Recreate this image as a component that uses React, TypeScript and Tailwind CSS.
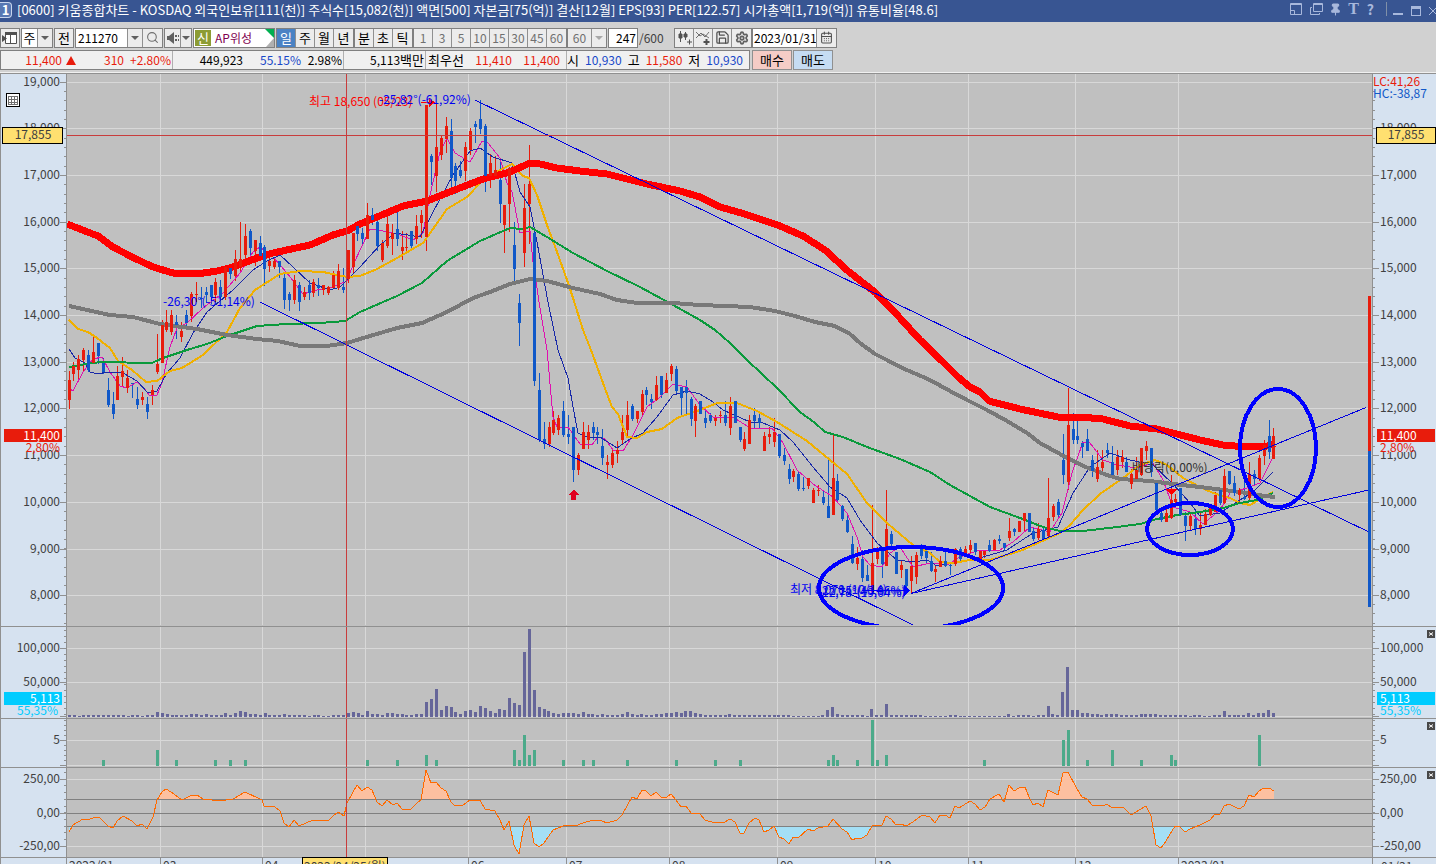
import React from 'react';
import { Search, Settings, Save, CalendarDays, Pin } from 'lucide-react';

type Candle = [x: number, high: number, top: number, bottom: number, low: number, up: 0 | 1];

const UP = '#e81c0c';
const DOWN = '#1058c8';
const GRID = '#d8d8d8';
const CROSS = '#c83c3c';

const PLOT_LEFT = 67;
const PLOT_WIDTH = 1305;

const candles: Candle[] = [
    [69, 371, 380, 400, 409, 1], [73, 362, 366, 374, 381, 1], [78, 355, 359, 370, 379, 1], [83, 348, 350, 360, 371, 1],
    [88, 350, 355, 370, 372, 0], [93, 336, 352, 363, 364, 1], [98, 343, 343, 356, 364, 0], [103, 358, 363, 372, 374, 0],
    [108, 378, 390, 405, 407, 0], [113, 392, 404, 414, 419, 0], [117, 366, 376, 400, 400, 1], [122, 357, 371, 377, 387, 1],
    [127, 370, 378, 388, 393, 1], [132, 383, 383, 384, 398, 0], [137, 387, 399, 405, 409, 0], [142, 392, 397, 400, 405, 1],
    [147, 397, 404, 412, 419, 0], [152, 385, 390, 395, 405, 1], [157, 334, 364, 372, 374, 1], [162, 320, 325, 363, 363, 1],
    [166, 310, 322, 330, 332, 1], [171, 310, 315, 332, 335, 1], [176, 315, 322, 325, 339, 0], [181, 322, 331, 337, 342, 1],
    [186, 310, 315, 323, 330, 0], [191, 292, 294, 316, 322, 1], [196, 282, 294, 295, 302, 1], [201, 287, 298, 299, 308, 0],
    [206, 287, 292, 295, 303, 0], [211, 285, 285, 297, 304, 0], [215, 278, 282, 295, 302, 1], [220, 280, 287, 297, 300, 0],
    [225, 266, 267, 297, 300, 1], [230, 266, 268, 274, 279, 0], [235, 250, 259, 276, 281, 1], [240, 222, 259, 267, 273, 1],
    [245, 224, 236, 255, 259, 1], [250, 229, 231, 248, 258, 0], [255, 240, 240, 251, 266, 1], [260, 236, 243, 256, 260, 0],
    [264, 245, 247, 269, 286, 0], [269, 257, 261, 266, 272, 1], [274, 257, 261, 267, 269, 1], [279, 261, 261, 267, 278, 0],
    [284, 273, 278, 300, 309, 0], [289, 292, 294, 300, 311, 0], [294, 275, 280, 300, 304, 1], [299, 282, 285, 302, 311, 0],
    [304, 287, 292, 297, 300, 1], [309, 280, 285, 293, 300, 0], [313, 279, 282, 293, 297, 1], [318, 278, 285, 288, 296, 0],
    [323, 285, 285, 290, 295, 1], [328, 286, 287, 293, 295, 1], [333, 271, 275, 288, 289, 1], [338, 264, 271, 288, 290, 1],
    [343, 268, 287, 290, 293, 0], [348, 250, 250, 279, 283, 1], [353, 233, 233, 267, 273, 1], [357, 225, 226, 234, 241, 0],
    [362, 228, 233, 239, 246, 0], [367, 203, 215, 239, 239, 1], [372, 208, 215, 220, 225, 0], [377, 219, 222, 246, 251, 0],
    [382, 240, 243, 260, 262, 1], [387, 212, 224, 246, 248, 1], [392, 224, 233, 239, 255, 1], [397, 210, 229, 239, 246, 0],
    [402, 231, 247, 251, 260, 1], [406, 233, 247, 248, 251, 1], [411, 231, 231, 246, 251, 0], [416, 215, 226, 239, 244, 1],
    [421, 210, 215, 223, 238, 1], [426, 105, 105, 237, 251, 1], [431, 154, 156, 162, 185, 0], [436, 104, 147, 176, 192, 1],
    [441, 135, 138, 155, 160, 1], [446, 117, 126, 139, 153, 1], [451, 119, 131, 178, 188, 0], [455, 163, 166, 181, 194, 0],
    [460, 161, 170, 176, 178, 0], [465, 142, 147, 171, 181, 1], [470, 128, 131, 150, 155, 1], [475, 121, 124, 127, 143, 0],
    [480, 100, 119, 129, 134, 0], [485, 124, 126, 176, 192, 0], [490, 154, 163, 176, 188, 1], [495, 156, 170, 176, 178, 1],
    [500, 161, 180, 204, 223, 0], [504, 205, 205, 225, 253, 1], [509, 167, 168, 204, 232, 1], [514, 222, 245, 269, 283, 0],
    [519, 294, 303, 323, 346, 0], [524, 184, 208, 253, 267, 1], [529, 145, 184, 204, 244, 1], [534, 231, 233, 381, 386, 0],
    [539, 373, 390, 440, 442, 0], [544, 422, 439, 444, 449, 0], [549, 422, 427, 444, 447, 1], [553, 411, 420, 433, 435, 1],
    [558, 415, 418, 430, 435, 1], [563, 401, 411, 435, 437, 0], [568, 415, 434, 437, 444, 0], [573, 427, 427, 470, 482, 0],
    [578, 453, 455, 470, 475, 1], [583, 422, 432, 449, 449, 1], [588, 425, 432, 440, 449, 1], [593, 422, 427, 433, 440, 0],
    [597, 427, 432, 435, 444, 0], [602, 429, 446, 458, 465, 0], [607, 455, 462, 465, 479, 1], [612, 448, 453, 465, 468, 1],
    [617, 441, 450, 454, 463, 1], [622, 415, 432, 440, 444, 1], [627, 401, 415, 430, 437, 1], [632, 404, 406, 419, 421, 0],
    [637, 411, 411, 419, 423, 1], [642, 390, 394, 412, 416, 1], [646, 387, 390, 395, 405, 0], [651, 394, 399, 402, 409, 0],
    [656, 376, 385, 400, 401, 1], [661, 376, 376, 395, 398, 0], [666, 373, 380, 393, 393, 1], [671, 364, 366, 374, 381, 1],
    [676, 366, 369, 391, 394, 0], [681, 387, 387, 398, 416, 0], [686, 380, 387, 393, 414, 0], [691, 397, 399, 419, 426, 0],
    [695, 404, 406, 421, 437, 1], [700, 401, 401, 414, 414, 0], [705, 410, 418, 423, 428, 0], [710, 413, 415, 421, 423, 0],
    [715, 415, 418, 421, 426, 1], [720, 411, 415, 416, 423, 1], [725, 401, 415, 423, 426, 0], [730, 397, 406, 428, 435, 1],
    [735, 401, 401, 423, 423, 0], [740, 427, 427, 440, 442, 0], [744, 432, 439, 449, 451, 1], [749, 415, 420, 444, 444, 1],
    [754, 408, 415, 421, 429, 0], [759, 413, 418, 423, 428, 0], [764, 432, 436, 451, 451, 1], [769, 427, 434, 437, 444, 1],
    [774, 418, 432, 442, 447, 1], [779, 434, 434, 456, 458, 0], [784, 448, 455, 461, 465, 0], [789, 464, 469, 479, 484, 0],
    [793, 469, 471, 477, 482, 1], [798, 471, 474, 489, 491, 0], [803, 477, 488, 489, 491, 0], [808, 478, 478, 486, 489, 1],
    [813, 488, 490, 503, 503, 1], [818, 485, 490, 491, 496, 1], [823, 490, 497, 503, 505, 0], [828, 457, 506, 518, 518, 0],
    [833, 434, 478, 515, 515, 1], [837, 474, 481, 500, 503, 0], [842, 505, 506, 519, 521, 0], [847, 513, 520, 532, 533, 0],
    [852, 536, 544, 563, 564, 0], [857, 547, 558, 564, 570, 1], [862, 550, 559, 578, 582, 0], [867, 565, 575, 581, 581, 0],
    [872, 505, 563, 592, 593, 1], [877, 547, 550, 559, 564, 1], [882, 547, 550, 564, 578, 0], [886, 490, 529, 566, 566, 1],
    [891, 531, 534, 544, 548, 0], [896, 552, 552, 574, 574, 0], [901, 560, 565, 570, 578, 1], [906, 569, 569, 586, 590, 0],
    [911, 556, 566, 581, 593, 1], [916, 552, 555, 577, 584, 1], [921, 544, 549, 556, 559, 0], [926, 549, 551, 558, 564, 0],
    [931, 552, 561, 571, 572, 0], [935, 565, 569, 572, 582, 1], [940, 556, 561, 567, 567, 1], [945, 551, 561, 566, 567, 0],
    [950, 563, 565, 566, 575, 0], [955, 548, 549, 564, 566, 1], [960, 547, 549, 559, 561, 0], [965, 546, 549, 554, 555, 1],
    [970, 540, 545, 550, 554, 1], [975, 543, 543, 552, 555, 0], [980, 550, 551, 560, 562, 1], [984, 551, 551, 555, 558, 1],
    [989, 540, 545, 551, 552, 0], [994, 539, 540, 550, 551, 1], [999, 535, 539, 541, 544, 0], [1004, 543, 543, 548, 551, 0],
    [1009, 518, 531, 538, 541, 1], [1014, 528, 529, 532, 536, 0], [1019, 521, 521, 532, 532, 1], [1024, 513, 513, 521, 532, 1],
    [1029, 513, 513, 532, 532, 0], [1033, 528, 531, 539, 541, 0], [1038, 523, 529, 538, 540, 1], [1043, 527, 530, 539, 541, 0],
    [1048, 478, 518, 536, 537, 1], [1053, 504, 506, 517, 521, 1], [1058, 499, 502, 515, 518, 0], [1063, 434, 460, 475, 484, 0],
    [1068, 388, 425, 482, 490, 1], [1073, 413, 429, 440, 444, 0], [1077, 418, 436, 440, 444, 0], [1082, 441, 443, 447, 458, 0],
    [1087, 429, 439, 451, 451, 0], [1092, 455, 460, 471, 477, 0], [1097, 450, 467, 479, 482, 1], [1102, 450, 462, 468, 475, 1],
    [1107, 443, 450, 453, 458, 0], [1112, 446, 462, 475, 475, 0], [1117, 450, 457, 470, 475, 1], [1122, 450, 457, 462, 468, 1],
    [1126, 457, 462, 472, 472, 0], [1131, 469, 474, 484, 489, 1], [1136, 457, 470, 479, 479, 1], [1141, 448, 448, 475, 476, 1],
    [1146, 441, 446, 451, 460, 1], [1151, 448, 448, 472, 477, 0], [1156, 483, 483, 510, 515, 0], [1161, 510, 513, 520, 522, 0],
    [1166, 508, 513, 522, 522, 1], [1171, 475, 500, 518, 519, 1], [1175, 494, 499, 502, 505, 1], [1180, 488, 488, 515, 516, 0],
    [1185, 512, 516, 526, 541, 0], [1190, 514, 516, 526, 530, 1], [1195, 509, 519, 529, 535, 0], [1200, 512, 525, 529, 535, 1],
    [1205, 509, 514, 525, 525, 1], [1210, 504, 508, 515, 516, 1], [1215, 492, 495, 512, 512, 1], [1220, 490, 490, 503, 505, 0],
    [1224, 469, 476, 503, 504, 1], [1229, 471, 471, 484, 485, 0], [1234, 476, 483, 493, 496, 0], [1239, 488, 490, 495, 503, 1],
    [1244, 475, 497, 499, 500, 0], [1249, 462, 474, 498, 502, 1], [1254, 470, 474, 479, 485, 0], [1259, 455, 458, 479, 481, 1],
    [1264, 440, 445, 456, 465, 1], [1269, 420, 436, 452, 459, 0], [1273, 428, 436, 459, 459, 1],
];

// moving averages, drawn in this order
const averages = [
    {
        color: '#e010b0', width: 1,
        points: '69,388 73,391 83,372 93,359 102,357 110,372 120,386 127,388 137,382 143,387 150,396 157,395 162,383 167,360 170,347 177,328 187,323 203,308 223,293 240,273 253,252 260,247 273,257 287,273 303,294 317,290 333,287 347,281 353,265 370,229 383,231 400,235 413,240 423,233 430,195 440,152 447,138 455,153 470,162 482,141 488,143 500,158 507,183 512,192 520,233 530,231 533,262 540,308 547,350 553,417 557,427 568,427 580,444 592,445 598,437 605,439 613,450 623,451 633,435 647,407 660,397 673,384 687,387 700,405 713,417 733,417 750,428 772,428 783,443 797,470 813,484 833,497 847,513 857,537 863,557 870,565 882,567 890,553 900,547 913,567 930,563 947,565 960,557 980,550 1000,550 1013,542 1030,527 1050,532 1053,527 1062,513 1072,473 1083,442 1090,443 1103,460 1117,465 1137,468 1153,463 1163,480 1173,507 1190,512 1203,524 1220,510 1230,493 1247,488 1260,483 1273,457',
    },
    {
        color: '#1828a8', width: 1,
        points: '69,349 75,358 85,363 90,372 98,374 107,372 123,373 137,381 148,393 157,391 167,373 180,358 193,333 207,312 233,290 253,270 267,261 280,255 293,267 310,283 330,290 340,287 360,267 380,245 395,233 420,237 433,212 453,175 470,151 480,148 493,157 512,163 520,192 530,207 537,242 548,302 558,350 568,378 573,407 578,433 587,437 600,437 617,448 630,439 643,433 657,417 673,395 687,391 700,394 713,402 723,410 750,422 763,423 780,430 793,442 813,467 830,487 847,498 860,520 877,543 897,560 913,562 927,560 937,566 957,562 983,557 1007,550 1033,533 1058,527 1073,493 1090,467 1110,453 1130,460 1153,465 1173,484 1190,503 1200,516 1220,513 1240,500 1253,492 1273,472',
    },
    {
        color: '#f0b000', width: 2,
        points: '69,320 78,329 88,332 97,338 110,348 118,361 132,370 146,382 157,381 170,371 182,368 203,355 227,332 240,308 255,290 280,274 300,271 323,272 347,277 360,276 377,269 397,258 423,243 433,229 447,209 467,197 483,180 500,170 512,164 523,176 529,178 537,195 547,225 557,252 567,280 573,298 583,330 591,350 603,383 612,407 618,414 627,437 637,438 647,432 662,429 677,418 700,410 717,403 737,403 757,411 777,422 807,441 830,460 847,474 867,503 887,523 913,545 930,553 940,562 953,563 970,560 990,560 1020,551 1040,542 1060,533 1070,525 1083,510 1100,494 1123,478 1140,465 1155,460 1167,465 1183,478 1200,487 1213,493 1230,498 1240,503 1250,505 1262,498 1273,492',
    },
    {
        color: '#0a9a3c', width: 2,
        points: '69,367 80,365 100,362 152,363 163,358 187,350 207,344 227,336 257,326 287,324 320,323 345,321 360,312 397,296 422,283 447,261 480,241 510,228 522,229 530,227 547,237 573,253 607,271 640,287 673,305 700,320 715,330 730,343 747,360 777,388 800,412 815,423 825,432 843,437 867,447 900,459 930,472 950,485 990,507 1020,518 1043,527 1060,531 1083,531 1117,527 1140,524 1157,519 1177,515 1200,512 1223,508 1240,503 1257,500 1273,493',
    },
    {
        color: '#787878', width: 4,
        points: '69,306 110,315 133,317 160,324 197,329 227,335 257,339 278,341 300,346 327,346 347,343 360,339 397,328 422,323 447,312 473,298 490,292 510,284 530,279 547,281 573,288 600,294 617,300 637,303 673,303 700,305 725,306 750,307 775,311 795,316 815,322 835,326 850,334 860,343 875,354 887,360 900,367 930,380 950,391 967,400 987,410 1007,421 1027,433 1040,443 1060,454 1083,466 1107,475 1120,479 1150,481 1173,484 1200,487 1240,492 1257,495 1275,497',
    },
    {
        color: '#ff0000', width: 7,
        points: '67,224 98,236 113,247 132,257 153,267 173,273 197,274 217,271 233,267 257,258 273,253 310,245 333,235 347,231 360,224 377,217 403,206 427,201 447,193 470,184 483,179 510,172 530,163 540,164 557,168 580,171 607,174 623,178 647,184 680,191 700,197 720,207 745,214 780,226 803,236 825,250 848,271 876,293 900,318 920,340 942,361 958,377 970,387 980,392 989,401 1020,409 1058,417 1080,417 1103,419 1130,426 1157,429 1177,434 1200,440 1223,445 1247,447 1267,446 1275,444',
    },
];

const volumes = [
    2, 2, 1, 2, 2, 2, 2, 2, 2, 2, 2, 2, 1, 2, 2, 1, 2, 2, 5, 4,
    3, 2, 2, 2, 2, 3, 3, 2, 3, 2, 2, 2, 4, 2, 4, 6, 5, 3, 3, 2,
    4, 2, 2, 2, 3, 2, 2, 2, 2, 1, 2, 2, 1, 1, 2, 2, 2, 4, 5, 4,
    2, 6, 3, 3, 2, 4, 4, 3, 3, 2, 2, 3, 3, 15, 18, 28, 7, 11, 10, 5,
    3, 6, 7, 5, 11, 9, 6, 4, 8, 7, 19, 14, 12, 65, 88, 27, 10, 8, 6, 4,
    3, 4, 4, 4, 3, 5, 3, 3, 2, 3, 2, 2, 2, 3, 5, 3, 2, 3, 2, 2,
    3, 3, 4, 4, 5, 4, 6, 6, 4, 3, 2, 2, 2, 2, 2, 3, 2, 2, 2, 2,
    2, 2, 2, 2, 2, 2, 2, 2, 1, 1, 1, 1, 1, 1, 2, 7, 10, 3, 2, 2,
    2, 2, 2, 1, 8, 2, 2, 13, 2, 2, 2, 2, 2, 2, 2, 1, 1, 1, 1, 1,
    2, 2, 1, 1, 1, 1, 1, 1, 1, 1, 1, 1, 3, 1, 2, 2, 2, 1, 2, 2,
    11, 3, 2, 25, 50, 7, 7, 4, 4, 3, 3, 2, 3, 3, 3, 2, 2, 2, 2, 3,
    3, 3, 3, 2, 2, 2, 2, 2, 2, 1, 2, 2, 1, 1, 2, 2, 6, 2, 2, 2,
    2, 4, 2, 4, 4, 7, 4,
];

const signals = [
    [103, 6], [157, 16], [176, 6], [215, 6], [230, 6], [245, 6], [367, 6], [397, 6], [426, 11], [436, 6],
    [514, 16], [519, 6], [524, 31], [529, 11], [534, 16], [563, 6], [583, 6], [593, 6], [627, 6], [676, 6],
    [715, 6], [740, 6], [828, 6], [833, 11], [837, 6], [857, 6], [872, 46], [877, 6], [886, 11], [984, 6],
    [1063, 26], [1068, 36], [1087, 6], [1112, 16], [1141, 6], [1171, 11], [1175, 6], [1259, 31],
];

const cci =
    '69,832 73,825 83,819 88,820 95,817 100,818 108,826 113,828 117,821 123,816 132,821 137,826 142,824 147,829 153,817 157,800 162,792 166,789 171,792 182,800 192,795 197,795 203,799 220,801 233,799 245,792 262,800 264,806 275,807 280,811 284,823 289,827 294,820 299,826 313,820 328,821 333,816 338,812 344,816 347,803 357,785 362,791 367,787 372,790 377,802 382,806 387,800 393,805 397,803 402,809 411,809 417,803 421,800 426,770 431,783 436,782 441,788 446,791 451,802 455,806 463,805 470,800 480,800 485,809 495,811 500,820 504,830 509,821 514,845 519,854 524,825 529,816 534,843 539,847 544,843 553,830 563,826 568,825 575,826 583,823 593,820 602,821 607,823 617,820 622,815 627,806 632,797 637,799 642,790 646,791 651,796 656,792 661,797 667,797 671,794 676,800 681,807 686,806 691,813 700,814 705,820 715,823 725,822 730,819 735,822 740,833 744,833 749,823 755,818 759,820 764,832 769,830 774,826 779,837 784,839 789,844 793,837 798,838 808,829 813,831 818,828 828,826 833,819 842,829 847,832 852,840 857,838 862,838 867,835 872,826 882,825 886,816 891,819 896,825 901,824 906,826 913,822 922,815 930,817 935,823 940,815 945,815 950,818 955,806 959,808 970,801 975,804 980,810 985,807 990,799 999,794 1004,802 1009,785 1014,791 1019,788 1025,787 1029,797 1033,805 1038,803 1043,807 1048,790 1058,795 1063,773 1068,772 1077,789 1082,797 1087,799 1092,805 1103,806 1107,804 1112,808 1123,807 1131,815 1136,812 1146,806 1151,816 1156,845 1161,848 1166,841 1175,826 1180,827 1185,832 1190,829 1200,825 1210,820 1215,814 1220,814 1224,806 1229,804 1239,809 1244,806 1249,795 1254,797 1259,791 1264,788 1269,788 1274,791';

const months: [number, string][] = [
    [66, '2022/01'], [160, '03'], [262, '04'], [365, ''], [468, '06'], [566, '07'], [669, '08'],
    [777, '09'], [875, '10'], [968, '11'], [1075, '12'], [1178, '2023/01'],
];

type Tick = [y: number, label: string];

const priceTicks: Tick[] = [
    [82, '19,000'], [128, '18,000'], [175, '17,000'], [222, '16,000'], [268, '15,000'], [315, '14,000'],
    [362, '13,000'], [408, '12,000'], [455, '11,000'], [502, '10,000'], [549, '9,000'], [595, '8,000'],
];
const volumeTicks: Tick[] = [[648, '100,000'], [682, '50,000'], [716, '']];
const signalTicks: Tick[] = [[740, '5'], [765, '']];
const cciTicks: Tick[] = [[779, '250,00'], [813, '0,00'], [846, '-250,00']];

const range = (from: number, to: number, step: number) => {
    const out: number[] = [];
    for (let v = from; v < to; v += step) out.push(Math.round(v));
    return out;
};

interface AxisProps {
    side: 'left' | 'right';
    top: number;
    height: number;
    ticks: Tick[];
    minor: number[];
    children?: React.ReactNode;
}

const Axis: React.FC<AxisProps> = ({ side, top, height, ticks, minor, children }) => {
    const left = side === 'left';
    return (
        <svg
            width={left ? 66 : 63}
            height={height}
            viewBox={left ? `0 ${top} 66 ${height}` : `1373 ${top} 63 ${height}`}
            className="block shrink-0 bg-[#d6e2f0] text-[12px]"
        >
            {left && <rect x="0" y={top} width="1" height={height} fill="#909090" />}
            {minor.map((y) => <rect key={y} x={left ? 64 : 1373} y={y} width="2" height="1" fill="#909090" />)}
            {ticks.map(([y, label]) => (
                <g key={y}>
                    <rect x={left ? 60 : 1373} y={y} width="6" height="1" fill="#909090" />
                    {label && (
                        <text x={left ? 60 : 1380} y={y + 4} textAnchor={left ? 'end' : 'start'} fill="#404040">{label}</text>
                    )}
                </g>
            ))}
            {children}
        </svg>
    );
};

interface PlotProps {
    top: number;
    height: number;
    lines: Tick[];
    children?: React.ReactNode;
    labels?: React.ReactNode;
}

const Plot: React.FC<PlotProps> = ({ top, height, lines, children, labels }) => (
    <div className="relative min-w-0 flex-1 overflow-hidden border-x border-[#909090] bg-[#c0c0c0]">
        <svg
            width="100%"
            height={height}
            viewBox={`${PLOT_LEFT} ${top} ${PLOT_WIDTH} ${height}`}
            preserveAspectRatio="none"
            shapeRendering="crispEdges"
            className="block"
        >
            {months.slice(1).map(([x]) => <rect key={x} x={x} y={top} width="1" height={height} fill={GRID} />)}
            {lines.map(([y]) => <rect key={y} x={PLOT_LEFT} y={y} width={PLOT_WIDTH} height="1" fill={GRID} />)}
            {children}
            <rect x="346" y={top} width="1" height={height} fill={CROSS} />
        </svg>
        {labels}
    </div>
);

const Note: React.FC<{ x: number; className: string; children: React.ReactNode }> = ({ x, className, children }) => (
    <span
        className={`absolute text-[12px] leading-4 whitespace-pre ${className}`}
        style={{ left: `${((x - PLOT_LEFT) / PLOT_WIDTH) * 100}%` }}
    >
        {children}
    </span>
);

const ClosePane = () => (
    <button aria-label="닫기" className="absolute top-[3px] right-px flex size-2 items-center justify-center bg-[#484848]">
        <svg viewBox="0 0 8 8" className="size-2" stroke="#fff" strokeWidth="1"><path d="M2 2.5l4 3M6 2.5l-4 3" /></svg>
    </button>
);

const Pane: React.FC<{ children: React.ReactNode }> = ({ children }) => (
    <section className="relative flex shrink-0 border-b border-[#909090]">{children}</section>
);

const priceMinor = range(91, 625, 9.33);

const PriceTags: React.FC<{ left?: boolean }> = ({ left }) => {
    const box = left ? 4 : 1377;
    const textX = left ? 60 : 1380;
    const anchor = left ? 'end' : 'start';
    return (
        <>
            <rect x={left ? 2.5 : 1376.5} y="127.5" width={left ? 60 : 59} height="16" fill="#ffe070" stroke="#000" />
            <text x={left ? 33 : 1406} y="139" textAnchor="middle" fill="#404040">17,855</text>
            <rect x={box} y="442" width="34" height="10" fill="#d6e2f0" />
            <rect x={box} y="429" width="58" height="13" fill={UP} />
            <text x={textX} y="440" textAnchor={anchor} fill="#fff">11,400</text>
            <text x={textX} y="452" textAnchor={anchor} fill={UP}>2,80%</text>
        </>
    );
};

const VolumeTags: React.FC<{ left?: boolean }> = ({ left }) => {
    const textX = left ? 60 : 1380;
    const anchor = left ? 'end' : 'start';
    return (
        <>
            <rect x={left ? 4 : 1377} y="692" width="58" height="13" fill="#00ccff" />
            <text x={textX} y="703" textAnchor={anchor} fill="#fff">5,113</text>
            <text x={left ? 58 : textX} y="715" textAnchor={anchor} fill="#00ccff">55,35%</text>
        </>
    );
};

const PricePane = () => (
    <Pane>
        <Axis side="left" top={74} height={552} ticks={priceTicks} minor={priceMinor}>
            <rect x="6.5" y="93.5" width="13" height="13" fill="#fff" stroke="#000" />
            <path d="M8.5 96.5h9M8.5 99.5h9M8.5 102.5h9M8.5 104.5h9M8.5 96v9M11.5 96v9M14.5 96v9M17.5 96v9" stroke="#707070" />
            <PriceTags left />
        </Axis>
        <Plot
            top={74}
            height={552}
            lines={priceTicks}
            labels={
                <>
                    <Note x={309} className="top-[19px] text-[#ff0000]">최고 18,650 (05/23)</Note>
                    <Note x={379} className="top-[17px] text-[#0000f0]">-25,82°(-61,92%)</Note>
                    <Note x={163} className="top-[219px] text-[#0000f0]">-26,30°(-51,14%)</Note>
                    <Note x={790} className="top-[507px] text-[#0000f0]">최저 8,070 (10/14)</Note>
                    <Note x={822} className="top-[510px] text-[#0000f0]">12,78°(19,04%)</Note>
                    <Note x={822} className="top-[508px] text-[#0000f0]">22,15°(43,06%)</Note>
                    <Note x={1132} className="top-[385px] text-[#303030]">배당락(0,00%)</Note>
                </>
            }
        >
            {candles.map(([x, high, top, bottom, low, up]) => (
                <g key={x} fill={up ? UP : DOWN}>
                    <rect x={x} y={high} width="1" height={low - high} />
                    <rect x={x - 1} y={top} width="3" height={bottom - top} />
                </g>
            ))}
            {averages.map(({ color, width, points }) => (
                <polyline key={color} points={points} fill="none" stroke={color} strokeWidth={width} strokeLinejoin="round" />
            ))}
            {/* candles stay visible on top of the long averages */}
            {candles.map(([x, , top, bottom, , up]) => (
                <rect key={x} x={x - 1} y={top} width="3" height={bottom - top} fill={up ? UP : DOWN} />
            ))}
            <g stroke="#0000e0" fill="none">
                <path d="M475 100L1371 533M260 302L913 625M911 593.500L1366 407.500M911 593.500L1371 489.500" />
            </g>
            <g stroke="#0000ff" strokeWidth="4" fill="none">
                <ellipse cx="911" cy="588" rx="92" ry="41" />
                <ellipse cx="1190" cy="529" rx="43" ry="26" />
                <ellipse cx="1278" cy="448" rx="38" ry="59" />
            </g>
            <path d="M573.500 489.500l5 5h-2.500v5h-5v-5h-2.500z" fill="#e00020" />
            <path d="M1166 489h11l-5.500 6z" fill="#ff0000" />
            <path d="M421 102h8v-4l6 4.500-6 4.500v-4h-8z" fill="#ff0000" />
            <path d="M862 590h42v-5l6 5.500-6 5.500v-5h-42z" fill="#0000ff" />
            <rect x={PLOT_LEFT} y="625" width={PLOT_WIDTH} height="1" fill="#c0c0c0" />
            <rect x="1368" y="296" width="3" height="155" fill={UP} />
            <rect x="1368" y="451" width="3" height="156" fill={DOWN} />
            <rect x={PLOT_LEFT} y="135" width={PLOT_WIDTH} height="1" fill={CROSS} />
        </Plot>
        <Axis side="right" top={74} height={552} ticks={priceTicks.slice(1)} minor={priceMinor}>
            <text x="1373" y="86" fill={UP}>LC:41,26</text>
            <text x="1373" y="98" fill={DOWN}>HC:-38,87</text>
            <PriceTags />
        </Axis>
    </Pane>
);

const volumeMinor = range(630, 716, 6);
const signalMinor = range(720, 765, 5);
const cciMinor = range(772, 852, 6.7);

const VolumePane = () => (
    <Pane>
        <Axis side="left" top={627} height={91} ticks={volumeTicks} minor={volumeMinor}><VolumeTags left /></Axis>
        <Plot top={627} height={91} lines={volumeTicks}>
            {volumes.map((h, i) => (
                <rect key={i} x={Math.floor(69.3 + i * 4.894) - 1} y={717 - h} width="3" height={h} fill="#666699" />
            ))}
        </Plot>
        <Axis side="right" top={627} height={91} ticks={volumeTicks} minor={volumeMinor}><VolumeTags /></Axis>
        <ClosePane />
    </Pane>
);

const SignalPane = () => (
    <Pane>
        <Axis side="left" top={719} height={48} ticks={signalTicks} minor={signalMinor} />
        <Plot top={719} height={48} lines={signalTicks}>
            {signals.map(([x, h]) => <rect key={x} x={x - 1} y={766 - h} width="3" height={h} fill="#4caa8a" />)}
        </Plot>
        <Axis side="right" top={719} height={48} ticks={signalTicks} minor={signalMinor} />
        <ClosePane />
    </Pane>
);

const CciPane = () => (
    <Pane>
        <Axis side="left" top={768} height={89} ticks={cciTicks} minor={cciMinor} />
        <Plot top={768} height={89} lines={cciTicks}>
            <clipPath id="overbought"><rect x={PLOT_LEFT} y="768" width={PLOT_WIDTH} height="31" /></clipPath>
            <clipPath id="oversold"><rect x={PLOT_LEFT} y="827" width={PLOT_WIDTH} height="30" /></clipPath>
            <polygon points={`69,799 ${cci} 1274,799`} fill="#fcc0a0" clipPath="url(#overbought)" />
            <polygon points={`69,827 ${cci} 1274,827`} fill="#a4dff5" clipPath="url(#oversold)" />
            {[799, 813, 826].map((y) => <rect key={y} x={PLOT_LEFT} y={y} width={PLOT_WIDTH} height="1" fill="#808080" />)}
            <polyline points={cci} fill="none" stroke="#ff6a00" />
        </Plot>
        <Axis side="right" top={768} height={89} ticks={cciTicks} minor={cciMinor} />
        <ClosePane />
    </Pane>
);

const DateAxis = () => (
    <div className="flex h-5 shrink-0 bg-[#d6e2f0] text-[12px] leading-4 text-[#404040]">
        <div className="w-[66px] shrink-0 border-l border-[#909090]" />
        <div className="relative min-w-0 flex-1 border-x border-[#909090]">
            {months.map(([x, label]) => (
                <Note key={x} x={x} className="-top-px h-5 border-l border-[#909090] pl-0.5">{label}</Note>
            ))}
            <Note x={302} className="-top-px border border-black bg-[#ffe070] px-px">2022/04/25(월)</Note>
        </div>
        <div className="w-[63px] shrink-0 pl-2">01/31</div>
    </div>
);

const Caret: React.FC<{ muted?: boolean }> = ({ muted }) => (
    <svg viewBox="0 0 8 4" className={`h-1 w-2 ${muted ? 'fill-[#a8a8a8]' : 'fill-[#606060]'}`}><path d="M0 0h8L4 4z" /></svg>
);

const group = 'flex h-5 shrink-0 divide-x divide-[#909090] border border-[#808080] bg-[#ececec]';
const cell = 'flex w-[19px] shrink-0 items-center justify-center';

const Group: React.FC<{ items: string[]; active?: string; muted?: boolean }> = ({ items, active, muted }) => (
    <div className={`${group} -mr-px ${muted ? 'text-[12px]' : ''}`}>
        {items.map((item) => (
            <button
                key={item}
                className={`${cell} ${item === active ? 'bg-[#4a82c4] text-white' : ''} ${muted ? 'text-[#707070]' : ''}`}
            >
                {item}
            </button>
        ))}
    </div>
);

const Toolbar = () => (
    <div className="flex h-7 items-center gap-px pt-[3px] text-[13px] leading-4">
        <button className={`${group} w-5 items-center justify-center`} aria-label="창 목록">
            <svg viewBox="0 0 16 14" className="h-[14px] w-4">
                <path d="M3.500 1.500h11v11h-11z" fill="#fff" stroke="#505050" />
                <path d="M3 1h12v3H3zM8 4h1v8H8zM0 4l5 3.500L0 11z" fill="#505050" />
            </svg>
        </button>
        <div className={`${group} w-8`}>
            <button className="w-4 grow bg-white">주</button>
            <button className="flex w-[14px] items-center justify-center" aria-label="종목 구분"><Caret /></button>
        </div>
        <button className={`${group} w-5 items-center justify-center`}>전</button>
        <div className={`${group} w-[88px]`}>
            <input aria-label="종목코드" defaultValue="211270" className="w-0 grow bg-white px-0.5 text-[12px] outline-none" />
            <button className="flex w-[15px] items-center justify-center" aria-label="최근 종목"><Caret /></button>
            <button className={cell} aria-label="종목 검색"><Search size={13} color="#707070" /></button>
        </div>
        <div className={`${group} w-7`}>
            <button className="flex grow items-center justify-center" aria-label="소리">
                <svg viewBox="0 0 14 12" className="h-3 w-[14px]" fill="#606060">
                    <path d="M1 4h2l5-4v12L3 8H1zM9 3h2v2H9zM12 3h1v2h-1zM9 7h2v2H9zM12 7h1v2h-1z" />
                </svg>
            </button>
            <button className="flex w-[10px] items-center justify-center" aria-label="소리 설정"><Caret /></button>
        </div>
        <div className="relative flex h-5 w-[82px] shrink-0 items-center gap-1 border border-[#808080] bg-white pl-px">
            <span className="flex h-4 w-4 items-center justify-center bg-[#8c9c34] text-white">신</span>
            <span className="text-[12px] text-[#800050]">AP위성</span>
            <svg viewBox="0 0 9 18" className="absolute top-0 right-0 h-[18px] w-[9px]">
                <path d="M0 0h9v9z" fill="#00b050" />
                <path d="M9 9v9H1z" fill="#b0b0b0" />
            </svg>
        </div>
        <Group items={['일', '주', '월', '년']} active="일" />
        <Group items={['분', '초', '틱']} />
        <Group items={['1', '3', '5', '10', '15', '30', '45', '60']} muted />
        <div className={`${group} w-10 text-[12px] text-[#707070]`}>
            <button className="grow">60</button>
            <button className="flex w-[14px] items-center justify-center" aria-label="분 선택"><Caret muted /></button>
        </div>
        <input aria-label="표시 개수" defaultValue="247" className="h-5 w-[30px] border border-[#808080] bg-white pr-px text-right text-[12px] outline-none" />
        <span className="w-[34px] text-[12px] text-[#404040]">/600</span>
        <div className={`${group} -mr-px`}>
            <button className={cell} aria-label="차트 종류">
                <svg viewBox="0 0 16 16" className="size-4" fill="#505050" stroke="#505050">
                    <path d="M4.500 1v11M9.500 2v8M13.500 9.500v5M11 12h5" fill="none" />
                    <path d="M3 4h3v4H3zM8 4h3v3H8z" />
                </svg>
            </button>
            <button className={cell} aria-label="지표 추가">
                <svg viewBox="0 0 16 16" className="size-4" fill="none" stroke="#505050">
                    <path d="M1 8l5-5 4 4 4-5M1 2l4 4 3-2 6 4" strokeWidth="0.8" />
                    <path d="M11.500 9v6M8.500 12h6" strokeWidth="2" />
                </svg>
            </button>
            <button className={cell} aria-label="저장"><Save size={15} color="#505050" /></button>
            <button className={cell} aria-label="설정"><Settings size={14} strokeWidth={3} color="#606060" /></button>
        </div>
        <div className={`${group} w-[85px]`}>
            <input aria-label="날짜" defaultValue="2023/01/31" className="w-0 grow bg-white pl-px text-[12px] outline-none" />
            <button className={cell} aria-label="달력"><CalendarDays size={13} color="#505050" /></button>
        </div>
    </div>
);

const Quote = () => (
    <div className="flex h-[22px] gap-0.5 text-[12px] leading-4">
        <div className="flex h-5 w-[750px] shrink-0 items-center divide-x divide-[#b0b0b0] border border-[#808080] bg-[#f0f0f0] whitespace-nowrap">
            <div className="flex h-full w-[172px] items-center justify-end text-right text-[#e81c0c]">
                11,400
                <svg viewBox="0 0 10 9" className="ml-1 h-[9px] w-[10px]" fill="#e81c0c"><path d="M5 0l5 9H0z" /></svg>
                <span className="w-12">310</span>
                <span className="w-12 pr-px">+2.80%</span>
            </div>
            <div className="flex h-full w-[171px] items-center justify-end pr-px text-right">
                <span>449,923</span>
                <span className="w-[58px] text-[#1848c8]">55.15%</span>
                <span className="w-[41px]">2.98%</span>
            </div>
            <div className="flex h-full w-[82px] items-center justify-end pr-px">5,113<span className="text-[13px]">백만</span></div>
            <div className="flex h-full w-[141px] items-center justify-between pr-1.5 pl-0.5 text-[#e81c0c]">
                <span className="text-[13px] text-black">최우선</span>
                <span>11,410</span>
                <span>11,400</span>
            </div>
            <div className="flex h-full grow items-center justify-between pr-1.5 text-[#1848c8]">
                <span className="text-[13px] text-black">시</span>10,930
                <span className="text-[13px] text-black">고</span>
                <span className="text-[#e81c0c]">11,580</span>
                <span className="text-[13px] text-black">저</span>10,930
            </div>
        </div>
        <button className="h-5 w-10 border border-[#909090] bg-[#f5ccc6] text-[13px]">매수</button>
        <button className="-ml-px h-5 w-10 border border-[#909090] bg-[#c6dcf2] text-[13px]">매도</button>
    </div>
);

const TitleBar = () => (
    <header className="flex h-[22px] shrink-0 items-center bg-[#385592] text-white">
        <span className="mb-0.5 flex h-4 w-3 shrink-0 items-center justify-center rounded-r-sm border border-l-0 border-[#c8d4ec] bg-[#5878b4] text-[13px] font-bold">1</span>
        <h1 className="mb-0.5 ml-[5px] grow text-[13px] leading-4 whitespace-nowrap">
            [0600] 키움종합차트 - KOSDAQ 외국인보유[111(천)] 주식수[15,082(천)] 액면[500] 자본금[75(억)] 결산[12월] EPS[93] PER[122.57] 시가총액[1,719(억)] 유통비율[48.6]
        </h1>
        <div className="mb-1 flex shrink-0 items-center text-[#a8b8dc]">
            <button aria-label="창 크기" className="mr-2">
                <svg viewBox="0 0 12 12" className="size-3" fill="none" stroke="currentColor"><path d="M.5.5h11v11H.5zM.5 1.500h11M.5 7.500h4v4" /></svg>
            </button>
            <button aria-label="새 창" className="mr-1.5">
                <svg viewBox="0 0 13 12" className="h-3 w-[13px]" fill="none" stroke="currentColor"><path d="M3.500.5h9v8h-9zM3.500 1.500h9M2 4.500H.5v7h9V10" /></svg>
            </button>
            <button aria-label="고정" className="mr-1.5"><Pin size={13} fill="currentColor" /></button>
            <button className="mr-2 font-['Liberation_Serif',serif] text-[16px] leading-4 font-bold">T</button>
            <button className="mr-3 text-[14px] leading-4 font-bold">?</button>
            <span className="mr-1.5 h-[14px] w-px bg-[#8090a8]" />
            <button aria-label="최소화" className="mr-2 h-3 w-[10px] border-b-2 border-current" />
            <button aria-label="최대화" className="mt-1 mr-2 h-[10px] w-[10px] border border-t-[3px] border-current" />
            <button aria-label="닫기" className="mt-1 -mr-px">
                <svg viewBox="0 0 8 8" className="size-2" stroke="currentColor"><path d="M0 0l8 8M8 0L0 8" /></svg>
            </button>
        </div>
    </header>
);

const App: React.FC = () => {
    return (
        <div className="flex h-screen flex-col overflow-hidden bg-[#d1d1d1] font-['Noto_Sans_CJK_KR',sans-serif] text-black">
            <TitleBar />
            <div className="flex h-[51px] shrink-0 flex-col border-b border-[#f0f0f0]">
                <Toolbar />
                <Quote />
            </div>
            <main className="flex min-h-0 grow flex-col border-t border-[#909090]">
                <PricePane />
                <VolumePane />
                <SignalPane />
                <CciPane />
                <DateAxis />
            </main>
        </div>
    );
};

export default App;
